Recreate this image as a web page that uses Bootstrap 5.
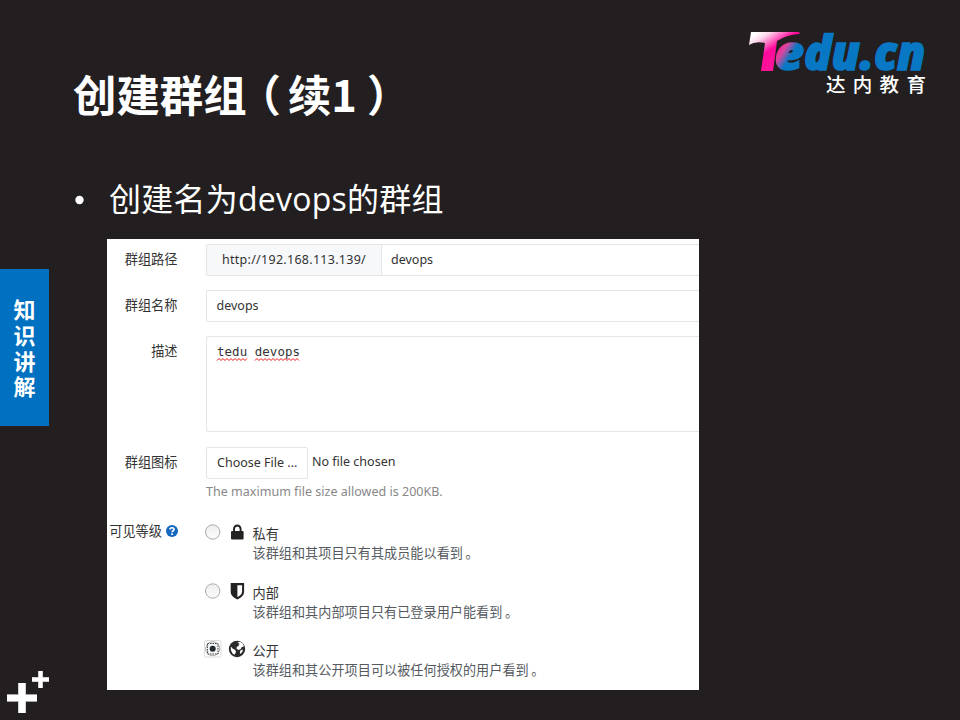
<!DOCTYPE html>
<html lang="zh-CN">
<head>
<meta charset="utf-8">
<title>创建群组</title>
<link href="https://cdn.jsdelivr.net/npm/bootstrap@5.3.0/dist/css/bootstrap.min.css" rel="stylesheet">
<style>
body{width:960px;height:720px;background:#231f20;color:#fff;font-family:"Open Sans","Noto Sans CJK SC",sans-serif;line-height:1.5}
.side{width:49px}
.side-tab{margin-top:269px;height:157px;background:#0070c0;font-size:22px;line-height:25.6px;font-weight:700;font-family:"Noto Sans CJK SC",sans-serif}
.side-tab span{width:22px}
.plus{margin:0 0 7px 7px}
.slide-main{padding-left:26px}
.slide-head{height:180px;padding:64px 31px 0 0}
.slide-title{font-family:"Noto Sans CJK SC",sans-serif;font-size:43.4px;font-weight:700;line-height:64px;margin:-3px 0 0 -2px}
.po{margin-left:-9px;margin-right:7px}
.pc{margin-left:10px}
.logo{margin-top:-36px}
.topic{font-size:32px;line-height:40px;height:59px;letter-spacing:.25px;margin-left:-1px;padding-right:1px}
.topic .dot{width:35px;height:40px}
.topic-text{margin-top:-1px}
.shot{width:592px;height:451px;margin-left:32px;background:#fff;color:#333;font-size:12.5px;line-height:20px;font-family:"Noto Sans","Noto Sans CJK SC",sans-serif;padding-top:5px}
.line{margin-bottom:14.2px}
.lbl{width:71px;margin-right:28px;padding-top:5px;text-align:right;font-size:13.2px;white-space:nowrap}
.lbl-text{margin-right:.5px}
.box{border:1px solid #e5e5e5;border-right:0;border-radius:2px 0 0 2px;height:32px;padding:5px 10px 4px 9.5px}
.addon{width:175px;background:#f7f8fa;border-right:1px solid #e5e5e5;margin:-5px 9px -4px -9.5px;padding:5px 0 0 15px;letter-spacing:.28px}
.area{height:96px;font:12.45px/20px "DejaVu Sans Mono",monospace}
.filebtn{border:1px solid #e5e5e5;border-radius:2px;width:102px;height:32px;padding:5px 0 0 10px}
.nofile{margin:5px 0 0 4px}
.hint{color:#888;margin-top:3.5px;letter-spacing:.02px}
.levels{margin-top:19px}
.opt{height:58.5px}
.opt .pic{width:16px;margin-right:6.5px}
.opt .rad{width:18px;margin:0 8px 0 -2px}
.opt-name{font-size:13.2px;line-height:19px;padding-top:4px}
.opt-desc{font-size:13.1px;line-height:19px;color:#555a60;letter-spacing:.06px}
.stop{margin-left:2.5px}
</style>
</head>
<body class="d-flex overflow-hidden m-0">
<aside class="side d-flex flex-column flex-shrink-0">
  <div class="side-tab d-flex flex-column align-items-center justify-content-center"><span>知</span><span>识</span><span>讲</span><span>解</span></div>
  <svg class="plus mt-auto" width="42" height="42" viewBox="0 0 42 42"><path fill="#a5a3a4" d="M11 12h8v11h11v8H19v11h-8V31H0v-8h11zM31 0h5v6h6v5h-6v6h-5v-6h-6V6h6z"/><path fill="#fff" d="M11.500 12h7v12h11.500v6H18.500v12h-7V30H0v-6h11.500zM31.500 0h4v6.500h6.500v4h-6.500v6.500h-4v-6.500h-6.500V6.500h6.500z"/></svg>
</aside>
<main class="slide-main flex-grow-1">
  <header class="slide-head d-flex justify-content-between align-items-start">
    <h1 class="slide-title">创建群组<span class="po">（</span>续1<span class="pc">）</span></h1>
    <svg class="logo" width="182" height="74" viewBox="747 28 182 74">
      <defs><linearGradient id="g" gradientUnits="userSpaceOnUse" x1="758" y1="32" x2="778" y2="62"><stop offset="0" stop-color="#fff"/><stop offset=".2" stop-color="#fbd5ea"/><stop offset=".6" stop-color="#ff0a9c"/><stop offset="1" stop-color="#ff149b"/></linearGradient>
      <linearGradient id="h" gradientUnits="userSpaceOnUse" x1="776" y1="50" x2="795" y2="62"><stop offset="0" stop-color="#ff1c98"/><stop offset=".3" stop-color="#d8479f"/><stop offset=".7" stop-color="#0878c4"/></linearGradient></defs>
      <path fill="url(#g)" d="M751 32H798Q801 33 799 34Q786 35 777 41L773 71H761L765 43Q755 41 749 45Z"/>
      <g font-family="Open Sans" font-weight="800" font-style="italic" font-size="48.5" stroke-width="1.6">
      <text x="774.500" y="69.500" textLength="29.500" lengthAdjust="spacingAndGlyphs" fill="url(#h)" stroke="url(#h)">e</text>
      <text x="804" y="69.500" textLength="121.500" lengthAdjust="spacingAndGlyphs" fill="#0878c4" stroke="#0878c4">du.cn</text></g>
      <text x="826" y="92" font-family="Noto Sans CJK SC" font-weight="500" font-size="19.5" letter-spacing="7.3" fill="#fff">达内教育</text>
    </svg>
  </header>
  <div class="topic d-flex"><span class="dot"><svg class="d-block" width="10" height="40" viewBox="0 0 10 40"><circle cx="5.500" cy="20" r="4.200" fill="#fff"/></svg></span><span class="topic-text">创建名为devops的群组</span></div>
  <section class="shot overflow-hidden">
    <div class="line d-flex"><div class="lbl"><span class="lbl-text">群组路径</span></div><div class="box d-flex flex-grow-1"><span class="addon">http://192.168.113.139/</span><span>devops</span></div></div>
    <div class="line d-flex"><div class="lbl"><span class="lbl-text">群组名称</span></div><div class="box flex-grow-1">devops</div></div>
    <div class="line d-flex"><div class="lbl"><span class="lbl-text">描述</span></div><div class="box area flex-grow-1"><svg class="d-block overflow-visible" width="84" height="20"><text x="0" y="14" fill="#333" textLength="83">tedu devops</text><path d="M0 18.500l2-2 2 2 2-2 2 2 2-2 2 2 2-2 2 2 2-2 2 2 2-2 2 2 2-2 2 2 2-2M38 18.500l2-2 2 2 2-2 2 2 2-2 2 2 2-2 2 2 2-2 2 2 2-2 2 2 2-2 2 2 2-2 2 2 2-2 2 2 2-2 2 2 2-2 2 2" fill="none" stroke="#f0191c"/></svg></div></div>
    <div class="d-flex"><div class="lbl"><span class="lbl-text">群组图标</span></div><div><div class="d-flex"><span class="filebtn">Choose File ...</span><span class="nofile">No file chosen</span></div><div class="hint">The maximum file size allowed is 200KB.</div></div></div>
    <div class="levels d-flex">
      <div class="lbl pt-0 d-flex justify-content-end align-items-center align-self-start"><span>可见等级</span><svg class="ms-1 flex-shrink-0" width="12" height="12" viewBox="0 0 12 12"><circle cx="6" cy="6" r="6" fill="#1468bd"/><path d="M4 4.500C4 2.200 8 2.200 8 4.400C8 5.800 6.100 5.600 6.100 7.200M6.100 8.300v1.600" fill="none" stroke="#fff" stroke-width="1.700"/></svg></div>
      <div>
        <div class="opt d-flex"><svg class="rad" width="18" height="22"><defs><linearGradient id="r" x2="0" y2="1"><stop stop-color="#eee"/><stop offset="1" stop-color="#fcfcfc"/></linearGradient></defs><circle cx="8.700" cy="11" r="7.200" fill="url(#r)" stroke="#aaa"/></svg>
          <svg class="pic" width="16" height="22" viewBox="0 0 16 22"><path d="M4 11V8a3.300 3.500 0 0 1 6.600 0v3" fill="none" stroke="#222" stroke-width="1.900"/><rect x="1" y="10" width="12.600" height="8.500" rx="1" fill="#222"/></svg>
          <div><div class="opt-name">私有</div><div class="opt-desc">该群组和其项目只有其成员能以看到<span class="stop">。</span></div></div></div>
        <div class="opt d-flex"><svg class="rad" width="18" height="22"><circle cx="8.700" cy="11" r="7.200" fill="url(#r)" stroke="#aaa"/></svg>
          <svg class="pic" width="16" height="22" viewBox="0 0 16 22"><path fill="#222" fill-rule="evenodd" d="M.700 3h13.400v8.500c0 4-3 6-6.700 8-3.700-2-6.700-4-6.700-8zM7.400 5.200v11.900c2.700-1.600 4.700-3 4.700-5.600v-6.300z"/></svg>
          <div><div class="opt-name">内部</div><div class="opt-desc">该群组和其内部项目只有已登录用户能看到<span class="stop">。</span></div></div></div>
        <div class="opt d-flex"><svg class="rad" width="18" height="22"><rect x=".500" y="2.500" width="16.500" height="16.500" rx="1.500" fill="#fff" stroke="#ddd"/><circle cx="8.700" cy="10.700" r="7" fill="#f4f4f4" stroke="#aaa"/><rect x="3.500" y="5.500" width="10.500" height="10.500" fill="none" stroke="#444" stroke-dasharray="1.500 1"/><circle cx="8.700" cy="10.700" r="3" fill="#222a30"/></svg>
          <svg class="pic overflow-visible" width="16" height="22" viewBox="0 0 16 22"><circle cx="7" cy="11" r="8.200" fill="#2a2a2a"/><path fill="#fff" d="M7.500 4.500l2.500-.7 3 2 1 2.700-2.200.5-1 2-2.300 1-2-1.200.3-2 2-.8-.3-1.300 1.200-.7zM.800 8.500l1.700 2 2.800 1.500.7 2-1.300 2.800-2.200-1.300-1.600-3.200zM10.500 12.300l2.300-.8-.2 2-2 2.500-.8-1.500z"/></svg>
          <div><div class="opt-name">公开</div><div class="opt-desc">该群组和其公开项目可以被任何授权的用户看到<span class="stop">。</span></div></div></div>
      </div>
    </div>
  </section>
</main>
<script src="https://cdn.jsdelivr.net/npm/bootstrap@5.3.0/dist/js/bootstrap.bundle.min.js"></script>
</body>
</html>
